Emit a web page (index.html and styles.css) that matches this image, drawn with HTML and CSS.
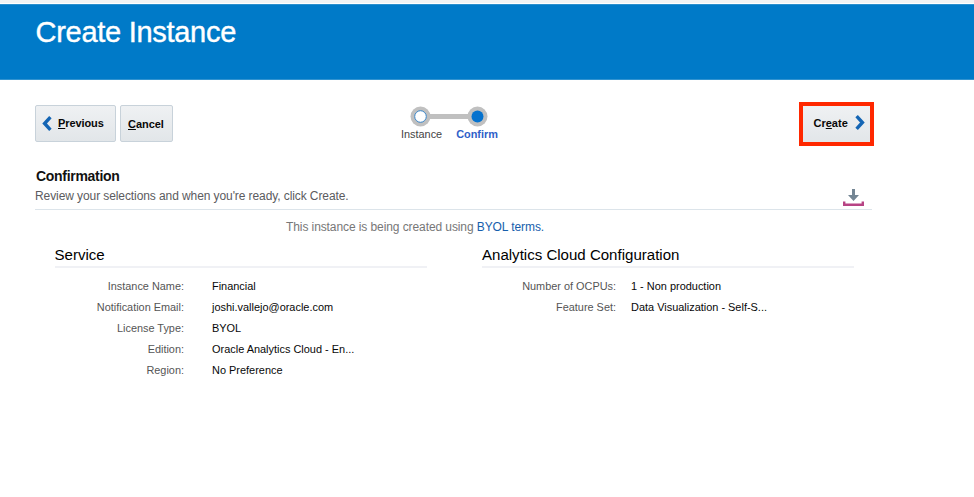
FILE: index.html
```
<!DOCTYPE html>
<html lang="en">
<head>
<meta charset="utf-8">
<title>Create Instance</title>
<link rel="stylesheet" href="styles.css">
</head>
<body>
<header class="banner"><h1>Create Instance</h1></header>
<main>
  <nav class="toolbar">
    <div class="actions">
      <button class="btn previous"><svg width="10" height="15" viewBox="0 0 10 15"><path d="M8.4 1.2 2.6 7.5l5.8 6.3" /></svg><span><u>P</u>revious</span></button>
      <button class="btn cancel"><span><u>C</u>ancel</span></button>
    </div>
    <div class="train">
      <svg width="78" height="22" viewBox="0 0 78 22">
        <path class="rail" d="M10 10.5h58"/>
        <circle class="ring" cx="10.5" cy="10.5" r="10"/><circle class="open" cx="10.5" cy="10.5" r="5.8"/>
        <circle class="ring" cx="67.5" cy="10.5" r="10"/><circle class="current" cx="67.5" cy="10.5" r="6"/>
      </svg>
      <div class="steps"><span>Instance</span><b>Confirm</b></div>
    </div>
    <button class="btn create"><span>Cr<u>e</u>ate</span><svg width="10" height="15" viewBox="0 0 10 15"><path d="M1.6 1.2 7.4 7.5l-5.8 6.3" /></svg></button>
  </nav>
  <section class="intro">
    <div>
      <h2>Confirmation</h2>
      <p>Review your selections and when you're ready, click Create.</p>
    </div>
    <svg class="download" width="21" height="18" viewBox="0 0 21 18">
      <path class="arrow" d="M9 0h3v6h4l-5.5 6L5 6h4z"/>
      <path class="tray" d="M1.2 12.5v3.3h18.6v-3.3"/>
    </svg>
  </section>
  <p class="notice">This instance is being created using <a>BYOL terms</a><span>.</span></p>
  <div class="summary">
    <section>
      <h3>Service</h3>
      <dl class="service">
        <dt>Instance Name:</dt><dd>Financial</dd>
        <dt>Notification Email:</dt><dd>joshi.vallejo@oracle.com</dd>
        <dt>License Type:</dt><dd>BYOL</dd>
        <dt>Edition:</dt><dd>Oracle Analytics Cloud - En...</dd>
        <dt>Region:</dt><dd>No Preference</dd>
      </dl>
    </section>
    <section>
      <h3>Analytics Cloud Configuration</h3>
      <dl class="config">
        <dt>Number of OCPUs:</dt><dd>1 - Non production</dd>
        <dt>Feature Set:</dt><dd>Data Visualization - Self-S...</dd>
      </dl>
    </section>
  </div>
</main>
</body>
</html>
```
FILE: styles.css
```
* { box-sizing: border-box; }
body {
  margin: 0;
  background: #fff;
  color: #111;
  font: 11px/21px "Liberation Sans", Arial, sans-serif;
}
h1, h2, h3, p, dl, dd { margin: 0; font-weight: normal; }
.banner {
  height: 80px;
  padding: 12px 0 0 35.5px;
  background: linear-gradient(#f2f3f4 0 3px, #fff 3px 4px, #2b8fce 4px 5px, #007ac8 5px 79px, #3193d0 79px);
}
h1 { color: #fff; font-size: 29px; letter-spacing: -.28px; line-height: 40px; -webkit-text-stroke: .4px #fff; }
main { width: 839px; margin-left: 35px; }
.toolbar {
  display: grid;
  grid-template-columns: 364px 1fr 75px;
  height: 85px;
  padding-top: 22px;
}
.actions { display: flex; gap: 4px; padding-top: 3px; }
.btn {
  display: flex;
  align-items: center;
  height: 37px;
  padding: 0;
  border: 1px solid #c8d2da;
  border-radius: 2px;
  background: linear-gradient(#eff1f3, #e2e6e9);
  color: #080808;
  font: bold 11px/20px "Liberation Sans", Arial, sans-serif;
}
.btn path { fill: none; stroke: #1465b4; stroke-width: 3.4; }
.btn u { text-decoration-thickness: 1px; text-underline-offset: 1px; }
.previous { width: 81px; padding-left: 6px; gap: 6px; }
.previous svg { margin-top: -1px; }
.previous span { margin-top: -2px; letter-spacing: -.1px; }
.cancel { width: 53px; padding-left: 7px; letter-spacing: -.05px; }
.create {
  width: 75px;
  height: 44px;
  padding-left: 10.5px;
  gap: 7.5px;
  border: 4.5px solid #ff2800;
  border-radius: 0;
}
.create span, .create svg { margin-top: -3px; }
.train { padding-top: 4px; }
.train svg { display: block; margin-left: 11.4px; }
.rail { stroke: #c0c0c0; stroke-width: 5; }
.ring { fill: #c0c0c0; }
.open { fill: #fff; stroke: #3a86c9; stroke-width: 1; }
.current { fill: #0572ce; }
.steps { display: flex; gap: 14px; margin: -2px 0 0 2px; line-height: 16px; color: #444; }
.steps b { color: #2f5fc9; }
.steps span, .steps b { font-size: 10.9px; }
.intro {
  display: flex;
  justify-content: space-between;
  width: 837px;
  height: 45px;
  padding: 1px 8px 0 0;
  border-bottom: 1px solid #dce4ea;
}
.intro h2 { margin-left: 1px; font-size: 14px; letter-spacing: -.3px; font-weight: bold; line-height: 21px; }
.intro p { font-size: 12px; letter-spacing: -.09px; line-height: 18px; color: #5b5b60; }
.download { margin-top: 23px; }
.arrow { fill: #748694; }
.tray { fill: none; stroke: #b74384; stroke-width: 2.4; }
.notice { padding: 7px 0 0 251px; font-size: 12px; letter-spacing: -.09px; color: #777; }
.notice a { color: #175eac; }
.notice span { color: #175eac; }
.summary { display: grid; grid-template-columns: 372px 372px; gap: 55.5px; padding: 7px 0 0 19.5px; }
h3 { height: 23px; border-bottom: 2px solid #f0f1f5; color: #000; font-size: 15.05px; line-height: 20px; }
dl { display: grid; padding-top: 8px; }
.service { grid-template-columns: 129.5px 1fr; column-gap: 28px; }
.config { grid-template-columns: 134px 1fr; column-gap: 15px; }
dt { color: #555; font-size: 10.9px; text-align: right; }
dd { color: #080808; font-size: 10.95px; }
```
